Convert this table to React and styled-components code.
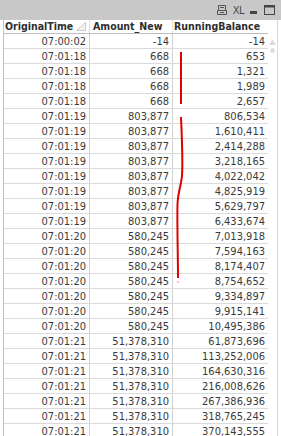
import React from 'react'
import styled, { createGlobalStyle } from 'styled-components'

const Global = createGlobalStyle`
  html, body { margin: 0; padding: 0; background: #fff; }
  body { font-family: "DejaVu Sans Condensed", "DejaVu Sans", sans-serif; }
`

const Box = styled.div`
  position: relative;
  width: 281px;
  height: 436px;
  overflow: hidden;
  background: #fff;
`

const Caption = styled.div`
  height: 20px;
  background: #c8c8c8;
  display: flex;
  align-items: center;
  justify-content: flex-end;
  gap: 6px;
  padding-right: 6px;
  box-sizing: border-box;
`

const CaptionIcon = styled.svg`
  display: block;
  flex: none;
`

const Xl = styled.span`
  font-family: "DejaVu Sans Condensed", "DejaVu Sans", sans-serif;
  font-size: 11px;
  color: #4a4a4a;
  letter-spacing: -0.5px;
  line-height: 11px;
  margin-top: 1px;
`

const Body = styled.div`
  display: flex;
`

const Grid = styled.div`
  margin-left: 3px;
  border-left: 1px solid #c4c4c4;
  width: 264px;
`

const Row = styled.div`
  display: grid;
  grid-template-columns: 86px 83px 95px;
  height: ${p => (p.$head ? 14 : 15)}px;
  border-bottom: 1px solid ${p => (p.$head ? '#bdbdbd' : '#dadada')};
  box-sizing: border-box;
`

const Cell = styled.div`
  display: flex;
  align-items: center;
  justify-content: ${p => (p.$head ? 'flex-start' : 'flex-end')};
  padding: ${p => (p.$head ? `0 0 0 ${p.$pad || 1}px` : '0 3px 0 0')};
  border-right: ${p => (p.$last ? 'none' : `1px solid ${p.$head ? '#e2e2e2' : '#d0d0d0'}`)};
  font-size: ${p => (p.$head ? 10.5 : 11)}px;
  font-weight: ${p => (p.$head ? 700 : 400)};
  color: ${p => (p.$head ? '#2e2e2e' : '#3a3a3a')};
  white-space: nowrap;
  box-sizing: border-box;
  line-height: 13px;
`

const Sort = styled.svg`
  margin-left: 3px;
  flex: none;
`

const Scroll = styled.div`
  width: 14px;
  display: flex;
  flex-direction: column;
  align-items: center;
  border-right: 1px solid #d6d6d6;
  margin-right: 3px;
  box-sizing: border-box;
  height: 416px;
  padding-top: 19px;
  gap: 3px;
`

const Thumb = styled.div`
  width: 5px;
  height: 5px;
  border-radius: 50%;
  background: #e0e0e0;
`

const Marks = styled.svg`
  position: absolute;
  left: 0;
  top: 0;
  pointer-events: none;
`

const rows = [
  ['07:00:02', '-14', '-14'],
  ['07:01:18', '668', '653'],
  ['07:01:18', '668', '1,321'],
  ['07:01:18', '668', '1,989'],
  ['07:01:18', '668', '2,657'],
  ['07:01:19', '803,877', '806,534'],
  ['07:01:19', '803,877', '1,610,411'],
  ['07:01:19', '803,877', '2,414,288'],
  ['07:01:19', '803,877', '3,218,165'],
  ['07:01:19', '803,877', '4,022,042'],
  ['07:01:19', '803,877', '4,825,919'],
  ['07:01:19', '803,877', '5,629,797'],
  ['07:01:19', '803,877', '6,433,674'],
  ['07:01:20', '580,245', '7,013,918'],
  ['07:01:20', '580,245', '7,594,163'],
  ['07:01:20', '580,245', '8,174,407'],
  ['07:01:20', '580,245', '8,754,652'],
  ['07:01:20', '580,245', '9,334,897'],
  ['07:01:20', '580,245', '9,915,141'],
  ['07:01:20', '580,245', '10,495,386'],
  ['07:01:21', '51,378,310', '61,873,696'],
  ['07:01:21', '51,378,310', '113,252,006'],
  ['07:01:21', '51,378,310', '164,630,316'],
  ['07:01:21', '51,378,310', '216,008,626'],
  ['07:01:21', '51,378,310', '267,386,936'],
  ['07:01:21', '51,378,310', '318,765,245'],
  ['07:01:21', '51,378,310', '370,143,555'],
]

export default function App() {
  return (
    <>
      <Global />
      <Box>
        <Caption>
          <CaptionIcon width="10" height="10" viewBox="0 0 10 10">
            <path d="M1.5 0.5h7v5h-7z M0.5 5.5h9v4h-9z" fill="none" stroke="#555" />
            <path d="M3 2.5h4 M3 7.5h4" stroke="#555" />
          </CaptionIcon>
          <Xl>XL</Xl>
          <CaptionIcon width="8" height="10" viewBox="0 0 8 10">
            <rect x="0" y="6" width="7" height="3" fill="#444" />
          </CaptionIcon>
          <CaptionIcon width="11" height="10" viewBox="0 0 11 10">
            <rect x="0.5" y="0.5" width="10" height="9" fill="none" stroke="#444" />
            <rect x="0" y="0" width="11" height="2.5" fill="#444" />
          </CaptionIcon>
        </Caption>
        <Body>
          <Grid>
            <Row $head>
              <Cell $head>
                OriginalTime
                <Sort width="10" height="9" viewBox="0 0 10 9">
                  <path d="M9.5 0.5 L9.5 8.5 L0.5 8.5 Z" fill="#f2f2f2" stroke="#c8c8c8" />
                </Sort>
              </Cell>
              <Cell $head $pad={3}>Amount_New</Cell>
              <Cell $head $last>RunningBalance</Cell>
            </Row>
            {rows.map((r, i) => (
              <Row key={i}>
                <Cell>{r[0]}</Cell>
                <Cell>{r[1]}</Cell>
                <Cell $last>{r[2]}</Cell>
              </Row>
            ))}
          </Grid>
          <Scroll>
            <svg width="7" height="6" viewBox="0 0 7 6">
              <path d="M3.5 0 L7 6 L0 6 Z" fill="#dcdcdc" />
            </svg>
            <Thumb />
          </Scroll>
        </Body>
        <Marks width="281" height="436" viewBox="0 0 281 436">
          <path d="M181 52 L181 104" stroke="#e00000" strokeWidth="2" fill="none" />
          <path
            d="M181 117 C182 140 183 160 182 176 C181 186 178 192 177.5 204 C177 225 178 255 178 278"
            stroke="#e00000"
            strokeWidth="2"
            fill="none"
          />
          <circle cx="178" cy="282" r="0.8" fill="#ff6060" />
        </Marks>
      </Box>
    </>
  )
}
